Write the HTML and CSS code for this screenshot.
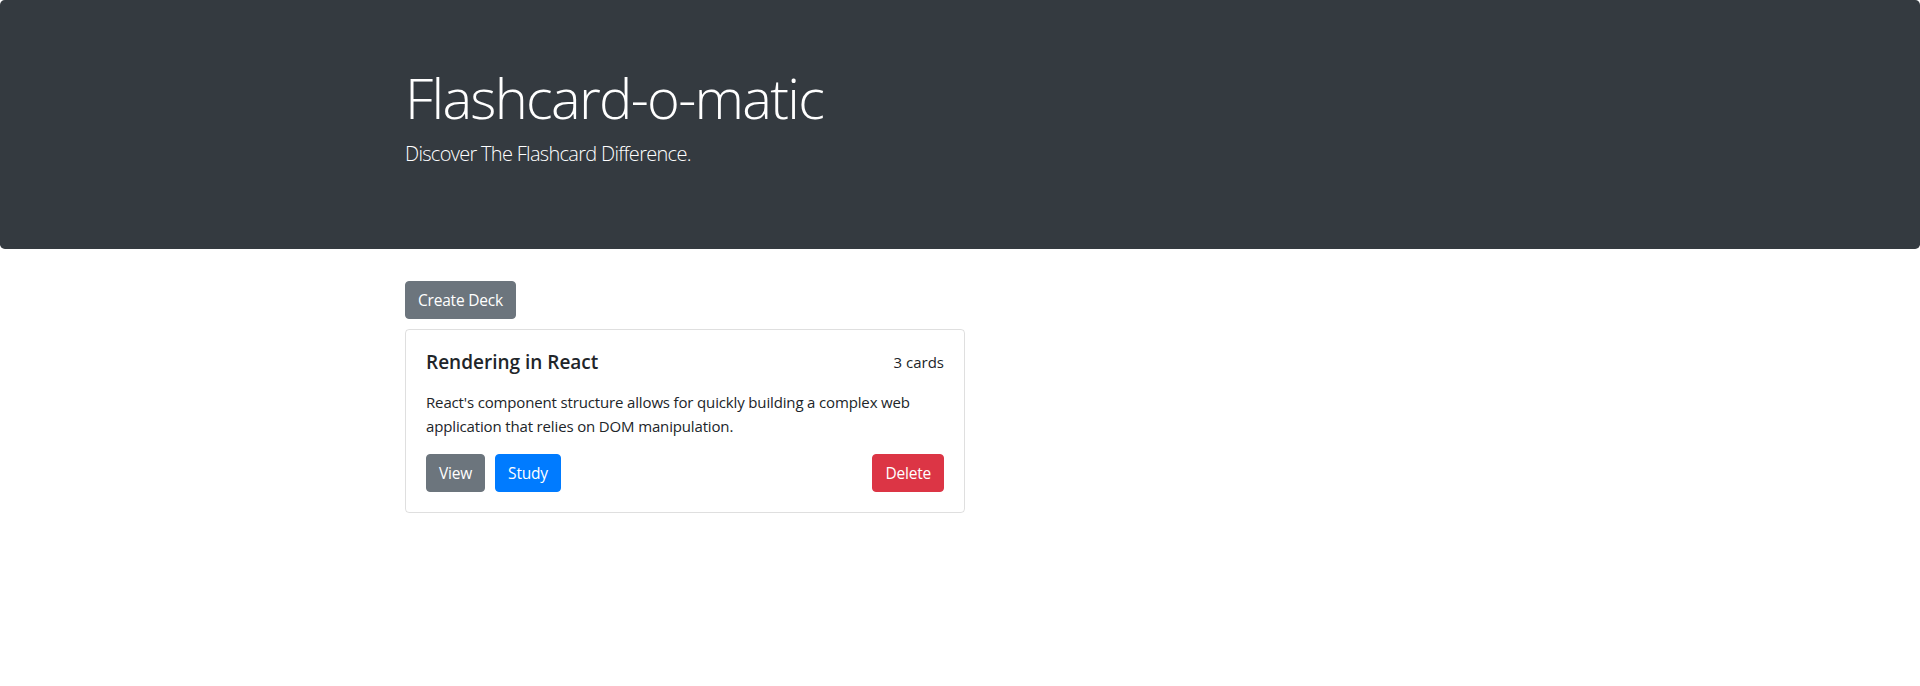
FILE: index.html
```html
<!DOCTYPE html>
<html lang="en">
<head>
<meta charset="utf-8">
<title>Flashcard-o-matic</title>
<link rel="stylesheet" href="styles.css">
</head>
<body>
  <header class="jumbotron">
    <div class="container">
      <h1 class="display">Flashcard-o-matic</h1>
      <p class="lead">Discover The Flashcard Difference.</p>
    </div>
  </header>
  <main class="container">
    <div class="actions">
      <button class="btn btn-secondary">Create Deck</button>
    </div>
    <div class="deck-list">
      <article class="card">
        <div class="card-header-row">
          <h5 class="card-title">Rendering in React</h5>
          <span class="card-count">3 cards</span>
        </div>
        <p class="card-text">React's component structure allows for quickly building a complex web application that relies on DOM manipulation.</p>
        <div class="card-buttons">
          <div class="left-buttons">
            <button class="btn btn-secondary">View</button>
            <button class="btn btn-primary">Study</button>
          </div>
          <button class="btn btn-danger">Delete</button>
        </div>
      </article>
    </div>
  </main>
</body>
</html>
```

FILE: styles.css
```css
* { box-sizing: border-box; }
html, body {
  margin: 0;
  padding: 0;
}
body {
  font-family: "Open Sans", "Noto Sans", "Liberation Sans", sans-serif;
  font-size: 16px;
  line-height: 1.5;
  color: #212529;
  background: #fff;
}
.container {
  width: 1140px;
  margin: 0 auto;
  padding: 0 15px;
}
.jumbotron {
  background: #343a40;
  color: #fff;
  padding: 64px 0;
  border-radius: 4.8px;
  margin-bottom: 32px;
}
.display {
  font-size: 56px;
  font-weight: 300;
  line-height: 1.2;
  margin: 0 0 8px;
  letter-spacing: -1.7px;
}
.lead {
  font-size: 20px;
  font-weight: 300;
  margin: 0 0 16px;
  letter-spacing: -0.7px;
}
.actions {
  margin-bottom: 10px;
}
.btn {
  font-family: inherit;
  display: inline-block;
  font-size: 15.5px;
  line-height: 24px;
  padding: 6px 12px;
  border: 1px solid transparent;
  border-radius: 4px;
  color: #fff;
  cursor: pointer;
  letter-spacing: -0.2px;
}
.btn-secondary { background: #6c757d; border-color: #6c757d; }
.btn-primary { background: #007bff; border-color: #007bff; }
.btn-danger { background: #dc3545; border-color: #dc3545; }
.deck-list {
  width: 560px;
}
.card {
  border: 1px solid rgba(0,0,0,.125);
  border-radius: 4px;
  padding: 20px;
}
.card-header-row {
  display: flex;
  justify-content: space-between;
  align-items: flex-start;
  margin-bottom: 16px;
}
.card-title {
  margin: 0;
  font-size: 19px;
  font-weight: 600;
  line-height: 24px;
}
.card-count {
  font-size: 15px;
  line-height: 24px;
}
.card-text {
  margin: 0 0 16px;
  font-size: 15px;
  line-height: 24px;
  letter-spacing: -0.15px;
}
.card-buttons {
  display: flex;
  justify-content: space-between;
}
.left-buttons {
  display: flex;
  gap: 10px;
}
```
